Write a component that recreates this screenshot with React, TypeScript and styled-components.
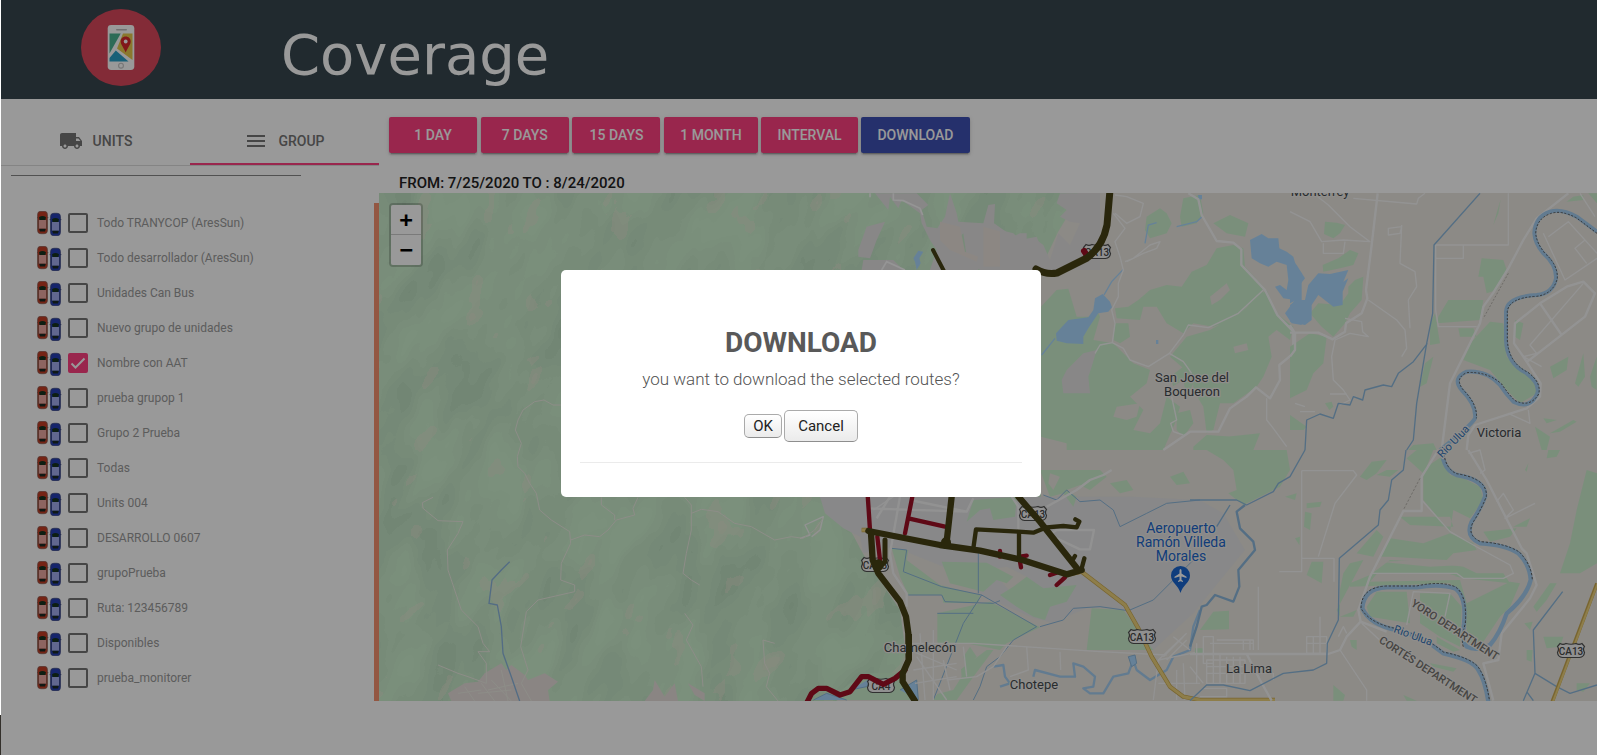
import React, { useState } from "react";
import styled, { createGlobalStyle } from "styled-components";

const GlobalStyle = createGlobalStyle`
  *, *::before, *::after { box-sizing: border-box; }
  html, body { margin: 0; padding: 0; }
  body { font-family: Roboto, "Liberation Sans", sans-serif; color: #222; background: #fff; }
`;

const Page = styled.div`
  display: flex;
  min-height: 100vh;
`;

const WindowEdge = styled.div`
  flex: 0 0 1px;
  background: linear-gradient(#fff 94.7%, #33302b 94.7%);
`;

const AppFrame = styled.div`
  position: relative;
  flex: 1;
  min-width: 0;
  display: flex;
  flex-direction: column;
`;

const Header = styled.header`
  display: flex;
  align-items: flex-start;
  gap: 120px;
  height: 99px;
  padding: 9px 80px;
  background: #37474f;
`;

const Title = styled.h1`
  margin: 13px 0 0;
  font: 400 56px/66px "DejaVu Sans", sans-serif;
  color: #fff;
`;

const Body = styled.div`
  flex: 1;
  display: flex;
`;

const Sidebar = styled.aside`
  flex: 0 0 378px;
  display: flex;
  flex-direction: column;
  padding-bottom: 54px;
`;

const Tabs = styled.div`
  display: flex;
  height: 67px;
  border-bottom: 1px solid #ddd;
`;

const Tab = styled.button<{ $active?: boolean }>`
  flex: 1;
  display: flex;
  align-items: center;
  justify-content: center;
  gap: 10px;
  margin: 0;
  padding: 20px 0 0;
  border: 0;
  border-bottom: 2px solid ${(p) => (p.$active ? "#ff4081" : "transparent")};
  background: none;
  color: #757575;
  font: 500 14px/20px Roboto, sans-serif;
  cursor: pointer;
`;

const Rule = styled.hr`
  width: 290px;
  margin: 9px 0 0 10px;
  border: 0;
  border-top: 1px solid #888;
`;

const GroupPane = styled.div`
  flex: 1;
  margin-top: 27px;
  padding-top: 3px;
  border-right: 5px solid #f5926e;
`;

const GroupList = styled.ul`
  margin: 0;
  padding: 0 0 0 36px;
  list-style: none;
`;

const GroupRow = styled.li`
  height: 35px;
`;

const GroupLabel = styled.label`
  display: flex;
  align-items: center;
  height: 34px;
  font-size: 12px;
  line-height: 16px;
  color: #9a9a9a;
`;

const CheckCell = styled.span`
  display: grid;
  margin: 0 9px 0 6px;
  > * { grid-area: 1 / 1; }
  svg { pointer-events: none; }
`;

const Check = styled.input`
  appearance: none;
  width: 20px;
  height: 20px;
  margin: 0;
  border: 2px solid #757575;
  border-radius: 2px;
  &:checked { background: #ff4081; border-color: #ff4081; }
  & + svg { visibility: hidden; }
  &:checked + svg { visibility: visible; }
`;

const Main = styled.main`
  flex: 1;
  min-width: 0;
  display: flex;
  flex-direction: column;
  padding-bottom: 54px;
`;

const Toolbar = styled.div`
  padding: 18px 10px 0;
  font-size: 15px;
  line-height: 36px;
`;

const ActionButton = styled.button<{ $primary?: boolean }>`
  min-width: 88px;
  height: 36px;
  padding: 0 16px;
  border: 0;
  border-radius: 2px;
  background: ${(p) => (p.$primary ? "#3f51b5" : "#ff4081")};
  color: #fff;
  font: 500 14px/36px Roboto, sans-serif;
  vertical-align: top;
  box-shadow: 0 3px 1px -2px rgba(0, 0, 0, 0.2), 0 2px 2px rgba(0, 0, 0, 0.14), 0 1px 5px rgba(0, 0, 0, 0.12);
  cursor: pointer;
`;

const RangeText = styled.p`
  margin: 20px 0 0 20px;
  font-size: 15px;
  font-weight: 500;
  line-height: 20px;
`;

const MapPane = styled.section`
  position: relative;
  flex: 1;
  overflow: hidden;
  background: #e9e6df;
`;

const MapDrawing = styled.svg`
  position: absolute;
  inset: 0;
  width: 100%;
  height: 100%;
  font-family: Roboto, sans-serif;
`;

const ZoomControl = styled.div`
  position: absolute;
  top: 10px;
  left: 10px;
  display: flex;
  flex-direction: column;
  border: 2px solid rgba(0, 0, 0, 0.2);
  border-radius: 4px;
  background-clip: padding-box;
`;

const ZoomButton = styled.button`
  width: 30px;
  height: 30px;
  padding: 0;
  border: 0;
  border-radius: 0 0 2px 2px;
  background: #fff;
  color: #000;
  font: 700 22px/30px "DejaVu Sans Mono", monospace;
  cursor: pointer;
  &:first-child { border-bottom: 1px solid #ccc; border-radius: 2px 2px 0 0; }
`;

const Overlay = styled.div`
  position: absolute;
  inset: 0;
  display: flex;
  align-items: center;
  justify-content: center;
  padding: 12px 0 0 4px;
  background: rgba(0, 0, 0, 0.4);
`;

const Dialog = styled.div`
  width: 480px;
  padding: 55px 19px 34px;
  border-radius: 5px;
  background: #fff;
  text-align: center;
`;

const DialogTitle = styled.h2`
  margin: 0;
  font-size: 28px;
  line-height: 36px;
  font-weight: 700;
  color: #595959;
`;

const DialogText = styled.p`
  margin: 8px 0 0;
  font-size: 17px;
  line-height: 20px;
  font-weight: 300;
  color: #545454;
`;

const DialogActions = styled.div`
  display: flex;
  align-items: center;
  justify-content: center;
  gap: 2px;
  margin: 21px 0 20px;
`;

const DialogButton = styled.button<{ $large?: boolean }>`
  width: ${(p) => (p.$large ? 74 : 38)}px;
  height: ${(p) => (p.$large ? 32 : 24)}px;
  padding: 0;
  border: 1px solid #aaa;
  border-bottom-color: #8e8e8e;
  border-radius: 5px;
  background: linear-gradient(#fff, #ebebeb);
  color: #222;
  font: 400 15px/20px Roboto, sans-serif;
  cursor: pointer;
`;

const DialogRule = styled.hr`
  margin: 0;
  border: 0;
  border-top: 1px solid #ebebeb;
`;

const Logo = () => (
  <svg width="80" height="77" viewBox="0 0 80 77" aria-hidden="true">
    <ellipse cx="40" cy="38.5" rx="40" ry="38.5" fill="#da495c" />
    <rect x="26.7" y="16" width="26.6" height="45" rx="3.4" fill="#fff" />
    <rect x="35" y="20" width="11" height="1.6" rx=".8" fill="#bbb" />
    <rect x="28.5" y="24.5" width="23" height="28.5" fill="#fff" />
    <path d="M28.5 24.5h11.2l-11.2 20z" fill="#4cb392" />
    <path d="M42 24.5h9.5V51L36 39.5z" fill="#e6c84c" />
    <path d="M34.8 41.5 47.5 52.5h-19v-3.4z" fill="#2ba0c8" />
    <path d="M44.7 27.6c-3 0-5 2.2-5 5 0 3.300 3 6 5 11 2-5 5-7.700 5-11 0-2.800-2-5-5-5z" fill="#d8282c" />
    <circle cx="44.700" cy="32.500" r="1.900" fill="#fff" />
    <circle cx="40" cy="56.700" r="2.400" fill="none" stroke="#c4c4c4" strokeWidth="1.100" />
  </svg>
);

const TruckIcon = () => (
  <svg width="24" height="24" viewBox="0 0 24 24" fill="currentColor" aria-hidden="true">
    <path d="M20 8h-3V4H3c-1.100 0-2 .9-2 2v11h2c0 1.660 1.340 3 3 3s3-1.340 3-3h6c0 1.660 1.340 3 3 3s3-1.340 3-3h2v-5l-3-4zM6 18.500c-.83 0-1.500-.67-1.500-1.500s.67-1.500 1.500-1.500 1.500.67 1.500 1.500-.67 1.500-1.500 1.500zm13.500-9 1.960 2.500H17V9.500h2.500zm-1.500 9c-.83 0-1.500-.67-1.500-1.500s.67-1.500 1.500-1.500 1.500.67 1.500 1.500-.67 1.500-1.500 1.500z" />
  </svg>
);

const MenuIcon = () => (
  <svg width="24" height="24" viewBox="0 0 24 24" fill="currentColor" aria-hidden="true">
    <path d="M3 18h18v-2H3v2zm0-5h18v-2H3v2zm0-7v2h18V6H3z" />
  </svg>
);

const Car = ({ body, glass, edge }: { body: string; glass: string; edge: string }) => (
  <>
    <path d="M-.3 6.600h11.600" stroke={edge} strokeWidth="1" />
    <rect x=".6" y=".3" width="9.800" height="22.400" rx="3.200" fill={body} stroke={edge} strokeWidth=".8" />
    <path d="M2 6.200Q5.500 4 9 6.200L8.300 9.300H2.700z" fill="#17331f" />
    <rect x="2" y="9" width="7" height="8.800" fill={glass} />
    <path d="M2.200 17.800h6.600l-.8 2.800H3z" fill="#1c2a24" />
    <path d="M1.400 9v9M9.600 9v9" stroke={edge} strokeWidth=".8" />
  </>
);

const CarsIcon = () => (
  <svg width="25" height="25" viewBox="0 0 25 25" aria-hidden="true">
    <g><Car body="#c43c24" glass="#eca8a2" edge="#8c6258" /></g>
    <g transform="translate(13 2)"><Car body="#263eb4" glass="#a2acee" edge="#3f4a80" /></g>
  </svg>
);

const Shield = ({ x, y, text = "CA13" }: { x: number; y: number; text?: string }) => (
  <g transform={`translate(${x} ${y})`}>
    <path d="M-11-7.500q3 1.600 6 0 5 1.500 10 0 3 1.600 6 0l2.500 3q-2 2.500 0 6-.5 4.500-5 5H-8.500q-4.500-.5-5-5 2-3.500 0-6z" fill="#f0f0f0" stroke="#505050" strokeWidth="1.200" />
    <text y="4" textAnchor="middle" fontSize="10" fontWeight="500" fill="#484848">{text}</text>
  </g>
);

const forest = "M379 193H1078L1070 212 1058 232 1041 268V497H820L845 520 861 550 870 566 900 610 906 655 898 676 868 680 836 701H379z";

const S = 1 / 3;

const CoverageMap = () => (
  <MapDrawing viewBox="379 193 1218 508" preserveAspectRatio="xMinYMin slice" role="img" aria-label="Coverage map">
    <defs>
      <clipPath id="hills"><path d={forest} /></clipPath>
      <filter id="relief" x="0" y="0" width="1" height="1" colorInterpolationFilters="sRGB">
        <feTurbulence type="fractalNoise" baseFrequency="0.026 0.012" numOctaves="3" seed="7" />
        <feColorMatrix values="0 0 0 0 .62  0 0 0 0 .74  0 0 0 0 .65  1 0 0 0 0" />
        <feComponentTransfer><feFuncA type="discrete" tableValues="0 0 0 .04 .09 .15 .23 .32 .4 .4" /></feComponentTransfer>
      </filter>
      <filter id="clearings" x="0" y="0" width="1" height="1" colorInterpolationFilters="sRGB">
        <feTurbulence type="fractalNoise" baseFrequency="0.034 0.018" numOctaves="3" seed="23" />
        <feColorMatrix values="0 0 0 0 .91  0 0 0 0 .9  0 0 0 0 .83  1 0 0 0 0" />
        <feComponentTransfer><feFuncA type="discrete" tableValues="0 0 0 0 0 0 0 .4 .6 .6" /></feComponentTransfer>
      </filter>
    </defs>
    <rect x="379" y="193" width="1600" height="900" fill="#e9e6df" />
    {/* western forest with its hill shading */}
    <path fill="#cef0cf" d={forest} />
    <g clipPath="url(#hills)">
      <rect x="300" y="-300" width="1100" height="1300" transform="rotate(24 640 440)" filter="url(#relief)" />
      <rect x="300" y="-300" width="1100" height="1300" transform="rotate(30 640 440)" filter="url(#clearings)" />
    </g>

    {/* northern suburbs */}
    <g transform={`translate(850 190) scale(${S})`}>
      <path fill="#e3e1e2" d="M75 10H200L235 45 215 60 230 110 262 115 285 80 300 10 320 70 325 95 400 100 415 45 435 42 432 100 490 140 510 130 530 130 530 180 560 200 560 150 580 165 600 210 625 130 660 165 690 100 660 95 630 80 650 60 620 40 630 10H750V240H530L500 220 500 180 480 240H390L350 200 340 130 320 150 330 190 385 190 385 240H240L260 180 240 150 215 100 210 70 155 30 145 55 120 20 115 60z" />
      <path fill="#e9e2da" d="M270 95 330 110 345 185 385 200 380 215 300 180 270 150zM400 110 470 130 500 180 480 230H400z" />
      <path fill="#e3e1e2" d="M25 180 50 110 105 95 80 150 60 205 25 200zM40 210H130L160 240H35z" />
      <path fill="none" stroke="#f8f8f8" strokeWidth="5" d="M60 22V10M130 10V30L160 32 210 55 218 75M95 240 110 215 165 240" />
      <path fill="#aad8fe" d="M190 205 205 182 220 185 208 205 212 220 200 240 195 215z" />
    </g>

    {/* San Jose del Boqueron and its lakes */}
    <g transform={`translate(1000 190) scale(${S})`}>
      <path fill="#cbefcd" d="M345 355 385 350 415 330 450 300 500 285 545 290 575 245 620 225 650 175 700 165 730 175 735 230 790 290 790 320 740 350 700 390 640 410 580 400 550 430 500 400 470 350 430 350 420 390 350 385zM345 400 385 400 390 440 360 460 340 450zM440 80 480 55 500 70 515 100 500 130 450 145 435 120zM550 25 600 15 610 70 590 100 545 110 540 80zM640 100 690 75 745 100 735 140 680 130zM800 300 830 370 880 410 870 450 830 420 805 440 815 500 790 560 770 590 700 640 660 640 640 720 620 730 610 650 580 600 580 560 510 500 560 440 630 420 720 370zM510 560 550 530 590 560 570 600 520 590zM530 670 570 660 580 700 550 740 530 720zM580 770 620 735 700 740 690 780H580zM680 740 780 730 760 780H690z" />
      <path fill="#cbefcd" d="M123 350 170 300 260 290 300 380 280 450 340 460 400 520 450 540 440 580 390 620 430 660 400 720 450 730 480 700 500 620 540 650 525 700 490 780H123z" />
      <path fill="#e9e6df" d="M200 280 260 260 300 310 280 380 230 380zM350 650 420 640 410 680 380 690 340 680zM630 320 680 280 690 300 660 330 635 345zM700 470 740 460 745 480 705 490zM550 570 560 620 500 600zM123 740 200 760 200 780H123z" />
      <path fill="#e3e1e2" d="M200 540 250 490 290 480 275 530 265 560 270 610 190 610 185 570zM0 120 40 130 60 150 110 140 130 190 140 240H0z" />
      <path fill="#aad8fe" d="M168 430 205 390 265 382 280 360 285 325 308 312 330 335 336 352 325 365 295 370 265 415 250 440 250 462 200 460 170 452zM750 150 785 132 805 145 835 145 838 175 860 185 880 200 890 235 905 250V405L875 400 855 370 885 330 850 325 825 290 840 285 860 300 865 270 860 225 830 215 805 230 780 220 755 205zM594 15H606V28H596zM468 450H475V462H468z" />
      <g fill="none" stroke="#aad8fe" strokeWidth="4"><path d="M606 80 590 95 530 110M470 98 445 105 435 160M370 238 335 275 312 315M165 445 125 495" /></g>
      <g fill="none" stroke="#f6f6f6" strokeLinejoin="round" strokeWidth="5">
        <path d="M565 10 595 28 605 75 650 153 700 158 724 178V225L795 300 832 375 880 425V490L838 525 840 570 810 625 768 592 740 620 690 655 655 725H570L490 780" strokeWidth="7" />
        <path d="M340 70 375 115 345 155 360 200 370 240 355 280 355 320 335 360 345 400 337 458 300 465 285 490M337 458 370 475 390 510 445 530 508 490 550 435 565 405 625 413 715 370 790 300M508 490 550 515 575 550M375 215 400 205 450 165 480 155 470 175 430 190 380 215M515 620 530 690 512 700 520 725 550 735M345 15 380 20 430 40 420 80 380 100 345 70M800 625V690L820 715 860 770" strokeWidth="4" />
      </g>
    </g>

    {/* Rio Ulua, upper reach */}
    <g transform={`translate(1290 190) scale(${S})`}>
      <path fill="#cbefcd" d="M105 95 140 98 165 105 150 130 130 145 102 132zM98 225 145 205 180 180 205 190 190 225 150 235 100 245zM175 290 195 270 220 260 215 330 180 370 165 400 130 440 95 410 60 370 85 340 150 345 175 310zM0 470 60 430 110 440 100 520 70 550 50 600 0 625zM0 675 50 710 40 720 0 720zM105 640 125 635 130 650 118 660zM445 380 475 330 580 330 570 390 440 400zM575 205 640 210 650 240 620 300 590 310 580 260 565 260zM420 400 435 370 450 460 420 465zM405 520 430 500 410 580 390 590zM545 455 600 395 640 400 650 500 730 560 740 610 690 640 650 600 600 540 520 510zM505 415 550 415 560 440 510 440zM675 390 700 400 690 450 675 440zM780 530 835 500 830 540 790 565zM855 580 880 490 885 560 865 590zM900 560 920 500V600L905 590zM760 685 800 690 770 700zM780 730 850 690 860 695 810 725zM735 710 780 740 770 780H755zM850 20 880 15V30L830 35zM895 10H921V40zM610 105 632 28 625 70zM370 765 430 760 440 780H355z" />
      <path fill="#aad8fe" d="M0 200 20 225 45 265 25 290 25 330 45 330 55 285 85 250 120 252 175 240 160 275 175 265 158 305 158 345 130 350 85 315 65 345 65 390 45 405 0 395V345L20 330 0 340z" />
      <g fill="none" stroke="#f6f6f6" strokeLinejoin="round">
        <path strokeWidth="7" d="M263 10 245 165 228 300 232 325 215 370 168 400 165 425 128 448 85 428H0M835 10 740 85 700 150 655 235 610 308 580 350 570 400 480 580 455 780M530 780 535 735 555 705 710 655 750 620 752 580 700 500 672 460 675 400 750 340 830 290 880 275 915 310 885 380 712 515M750 340 815 435M0 405 15 430V480L0 500" />
        <path strokeWidth="4" d="M0 65 60 95 95 155 160 150 240 155 180 110 115 45 70 10M190 25 380 42 385 25 405 10M435 165H655L655 10M437 165 437 360 445 410H560M437 205H520V165M235 330 320 390 345 420 350 475 335 500M335 105 330 220 375 245 380 290 355 330 360 415M165 385 215 395 218 425 235 440 180 430 135 450 125 500 130 570 160 600 180 630 150 645M775 140 835 95 921 190M760 130 825 270 921 205M885 150 855 175 890 220M880 280 720 465 740 490M740 490 700 500 755 530M655 670 720 700 715 660M870 10 915 80M120 612H170M295 115 335 110 330 130 295 135zM100 160V190H160L165 155M15 640 45 650M30 665H75" />
      </g>
      <g fill="none" stroke="#8cb8dc" strokeLinejoin="round">
        <path strokeWidth="4" d="M570 10 432 165 428 370 410 460 380 640 370 750 350 780M412 460 370 515 325 550 305 590 280 585 225 600 218 630 190 620 180 645 145 640 130 685 90 672 50 690 45 780" />
        <path stroke="#a4cdf0" strokeWidth="12" d="M921 125 860 80Q815 55 780 65Q735 80 733 130Q735 160 760 190Q800 225 798 265Q790 310 740 315Q650 320 648 365V450Q650 520 710 550Q750 580 742 610Q720 660 670 635Q650 615 630 585Q590 540 530 545Q485 565 515 600Q560 645 555 685Q545 705 450 780" />
        <path stroke="#5a5a5a" strokeWidth="3" strokeDasharray="6 5" d="M921 130 860 84Q815 60 784 70Q740 84 737 130Q740 160 765 190Q804 225 802 265Q790 312 740 319Q656 323 652 365V450Q655 518 714 547Q755 578 746 612Q720 655 674 631Q655 612 635 582Q590 543 530 548Q492 565 520 600Q564 645 559 685" />
        <path stroke="#b8b4ae" strokeWidth="3" strokeDasharray="6 5" d="M655 250 580 385" />
      </g>
    </g>

    {/* city, airport and southern valley */}
    <g transform={`translate(800 470) scale(${S})`}>
      <path fill="#e3e3e4" d="M60 80H1000L1200 90 1270 130 1335 240 1180 430 1060 540 970 420 870 410 800 440 760 460 690 440 600 400 560 385 430 290 280 230 190 250 180 200 130 175 75 130z" />
      <path fill="#e9e6df" d="M300 375 425 380 410 520 340 540zM640 375 600 330 560 300 620 290 680 320z" />
      <path fill="#cbefcd" d="M500 155 520 90 650 80 645 140 580 150 570 115 540 120zM275 235 325 240 320 270 420 345 540 375 535 400 430 398 425 375H325L300 320zM425 275 560 278 640 320 620 340 590 330 550 365 450 340zM412 430 545 400 570 395 720 472 620 520 600 540 500 520H412zM600 375 640 350 680 320 730 355 830 345 800 395 750 410 735 450 700 440 650 410zM875 415 970 420 1060 540 860 540zM720 0 900 0 920 20 870 60 840 45 800 60 830 80 820 110 790 70 750 80zM930 40 980 30 1000 60 960 70zM1110 20 1150 5 1170 40 1130 45zM0 690 100 680 150 640 210 610 300 610 320 640 330 690zM400 690 420 660 480 600 560 540 580 540 520 620 470 690zM490 560 510 530 530 560 500 590z" />
      <path fill="#e9e6df" d="M750 10 780 20 760 60 745 40zM50 690 75 670 100 680zM420 540 480 560 485 620 460 660 340 690 330 620 340 500 400 480z" />
      <g fill="none" stroke="#8cb8dc" strokeWidth="3" strokeLinejoin="round">
        <path d="M730 75 770 90 800 60 840 95 900 90 940 120 960 170 1040 130 1100 100 1200 90M275 235 320 240 310 305 425 350 545 375 710 470 640 510 600 560 560 590 540 650 520 690M325 375H425L435 395 580 400 600 392M545 375 490 460 400 690M412 430H520M720 470 790 450 820 415 900 410 985 422 1060 390 1150 300 1200 250M535 240V370" />
        <path strokeWidth="7" stroke="#a4cdf0" d="M580 590 610 585 615 620 630 640 600 650M700 620 705 600 780 620 825 620 820 580 850 590 885 620 880 650 850 655 870 670 910 670 940 620 985 610 1000 570 1010 600 1050 630 1100 600 1120 560 1170 540 1180 470 1200 420" />
        <path fill="#aad8fe" d="M985 560 1005 555 1010 580 995 590zM40 690 80 670 140 690M150 660 200 650 220 620M300 660 350 630 355 690" />
      </g>
      <g fill="none" stroke="#f4f4f4" strokeLinejoin="round">
        <path strokeWidth="7" d="M270 80 230 145M300 80 270 250 280 310 320 370 320 410M740 110 830 60 870 30 910 15 935 0M635 80 655 110V190M200 115 500 125 520 85M330 90 500 125M755 190 770 180 882 180 870 238H840L770 205" />
        <path strokeWidth="4" d="M0 205 30 195 15 165 70 140 60 180 35 200M220 120 280 80M330 520H520L900 545 1100 555M440 630 530 620 580 590 620 530M490 530 500 620M680 530 685 600 630 620M780 545 782 600M340 545 470 600M350 560 440 690M400 480V690M360 490 375 690M430 570 450 660M340 600 470 580M345 640 470 620M1060 690 1075 570 1160 490M1075 570 1200 545M1090 560 1150 500M1100 570 1160 510M1120 500 1170 540M1130 600V690M1075 640H1200M1150 580 1155 690" />
      </g>
      <g fill="none" strokeLinejoin="round"><path stroke="#c9a850" strokeWidth="13" d="M185 180H210M800 315 845 305 975 405 1015 475 1055 560 1110 650 1150 680 1200 690H1425" /><path stroke="#edd27c" strokeWidth="9" d="M185 180H210M800 315 845 305 975 405 1015 475 1055 560 1110 650 1150 680 1200 690H1425" /></g>
    </g>

    {/* La Lima and Rio Ulua, lower reach */}
    <g transform={`translate(1190 450) scale(${S})`}>
      <path fill="#cbefcd" d="M50 0H290L300 60 270 110 240 125 160 165 115 130 140 120 130 60 100 30zM510 80 545 35 590 30 560 70 530 90zM560 75 590 60 625 60 600 80zM1075 0H1110L1100 20 1070 25zM1005 60 1015 40 1010 65zM285 140 320 130 315 150zM350 160 395 155 390 170 350 175zM345 185 365 190 360 240 342 230zM350 375 365 335 400 335 395 400zM315 265 330 260 328 285zM30 540 70 485 117 482V538zM15 595H40V610H15zM480 570 500 570 500 600 485 590zM430 705 465 735 460 752H430zM640 735 680 752 650 752zM710 50 730 0H680L650 25 700 70V150L780 245 790 180 840 205 880 150 870 110 820 85 780 75 755 20zM630 200 780 200 790 230 660 225zM500 310 560 240 580 260 550 320zM460 370 480 340 520 330 440 480 450 500 500 480 490 500 450 500V420zM570 320 600 265 700 280 780 250 850 280 860 300 790 310 770 330 600 320zM480 400 540 375 600 330 700 335 820 350 860 370 940 370 960 400 820 385 760 370 560 372 540 395 810 390 830 460 960 395 990 400 960 470 930 500 880 575 835 580 820 450 780 400 480 410zM530 470 560 425 650 425 660 520 540 500zM690 430H780L815 470 810 590 750 560 690 520zM740 560 810 600 790 605 740 580zM720 640 800 655 790 665 730 650zM880 245 980 235 960 260 900 275zM970 230 1020 205 1010 230zM1110 370 1140 280 1160 180 1190 60 1221 70V340L1170 370zM1030 470 1080 400 1100 400 1070 450 1040 485zM1060 560 1120 560 1110 590 1070 595zM1003 520 1028 515 1020 540zM1010 600 1028 600 1025 635 1010 630zM1160 700 1200 700 1180 725 1160 720z" />
      <g fill="#e9e6df"><path d="M570 335 700 330 820 345 720 350zM600 372H780L800 378 620 380z" /></g>
      <g fill="none" stroke="#f6f6f6" strokeLinejoin="round">
        <path strokeWidth="7" d="M745 0 695 80V183H640L540 380 505 480 512 515 470 560 450 600 415 612H0M512 515 590 545M835 0 890 90 995 295 1010 310 1040 405 1020 445 935 550 925 630 880 640 910 752M170 612 210 690 245 752" />
        <path strokeWidth="4" d="M335 62H490L500 75 435 160 385 320M335 62V365H268M335 325H432V395M695 150 780 245 850 285 960 345 970 370 940 385H820L800 370H545M515 520 590 590M450 600 530 720V752M205 410V600M920 155 940 130 970 180 945 205 1035 160M835 10 870 0 885 60 870 70M650 525 670 425 780 430 765 500M40 560H70V640H40zM80 570H190V600M50 630H165V700H50zM60 580H190M50 650H165M50 670H165M70 610V700M90 610V700M110 620V700M130 620V700M150 620V700M350 560H410V610H350zM350 580H410M370 560V610M390 500V610M20 580V700M40 715H110V740H30M200 670H250V690M0 650 40 700M180 570V600M160 570V600M445 560 460 530 470 550" />
      </g>
      <g fill="none" stroke="#8cb8dc" strokeLinejoin="round">
        <path strokeWidth="4" d="M345 0 300 80 265 100 250 125 170 165 140 150 0 150M120 165 80 230M648 0 640 60 605 90 595 150 570 180 565 225 448 325 445 510 412 580 410 640 370 660 280 670 180 722 100 705 50 705 0 752M1118 425 1030 540 1035 670 1100 710 1140 730 1221 705M1035 670 1000 752M1010 725 1030 752" />
        <path strokeWidth="7" d="M165 165 140 185 150 235 190 275 195 300 145 360 148 410 130 455 75 435 50 465 35 470 20 530 0 590" />
        <path stroke="#a4cdf0" strokeWidth="13" d="M755 0Q760 60 800 75Q890 90 885 140Q870 180 845 215Q825 260 870 280Q950 285 985 310Q1020 345 1022 390Q1010 440 950 490Q930 550 900 585Q860 605 830 590Q815 570 822 520Q830 440 795 415Q750 400 680 412L590 412Q520 415 517 475Q540 525 620 540Q700 560 760 610Q850 630 865 660Q885 690 895 755" />
        <path stroke="#5a5a5a" strokeWidth="3" strokeDasharray="7 5" d="M760 0Q765 56 800 71Q894 86 889 140Q872 182 849 217Q829 256 872 275Q952 281 989 307Q1025 345 1027 390M820 590Q812 570 826 520Q832 434 795 410Q750 392 680 408L590 408Q514 411 513 475Q540 521 620 536Q700 556 760 606Q855 626 870 660Q889 690 899 755" />
        <path stroke="#b8b4ae" strokeWidth="3" strokeDasharray="7 5" d="M690 85 640 180" />
      </g>
      <path fill="none" stroke="#c9a850" strokeWidth="11" d="M1221 400 1085 760" />
      <path fill="none" stroke="#edd27c" strokeWidth="6" d="M1223 400 1087 760" />
    </g>

    {/* mountain trails and streams */}
    <g transform={`translate(378 190) scale(${S})`} fill="none" strokeLinejoin="round">
      <path fill="#e6dedb" d="M210 1510 260 1480 300 1475 320 1450 370 1420 385 1440 400 1425 440 1455 450 1470 500 1450 540 1475 510 1500 515 1533H220zM800 1533 825 1500 830 1470 860 1520 890 1480 900 1533zM930 1480 980 1510 980 1533 950 1515z" />
      <g stroke="#ebebe2" strokeWidth="3">
        <path d="M550 645 525 645 498 630 470 635 435 660 420 690 412 720 430 760 418 800 420 830 440 850 455 880 475 910 485 960 520 990 575 1025 578 1060 550 1120 548 1170 590 1185 590 1205 480 1230 445 1265 428 1370 450 1440 430 1480 460 1533" />
        <path d="M165 922 133 938 135 955 180 992 255 995 240 1030 208 1080 210 1140 250 1260 300 1310 315 1360 335 1385 300 1385 325 1420V1480L270 1460 240 1450 180 1425" />
        <path d="M578 1050 620 1035 665 1040 690 1020 715 990 770 975 765 955 780 922M670 922 670 945 710 975V990M920 922 940 945V1020L925 1090 915 1150 940 1170 965 1185M940 970 970 958 1020 965 1070 1000 1120 1010 1190 1050 1240 1040 1275 1045 1310 1020 1335 985M920 1270 945 1305 925 1350 970 1430 975 1490M1190 1360 1155 1350 1160 1420 1175 1450 1165 1490 1200 1533" />
        <path d="M330 1500 420 1480M300 1510 400 1500M340 1470 400 1533M370 1440 390 1533M310 1480 350 1533M260 1490 290 1533M240 1510 310 1500" />
      </g>
      <path stroke="#8ab4dc" strokeWidth="4" d="M395 1115 370 1140 342 1170 333 1240 358 1245 370 1310 375 1390 400 1460 425 1533" />
    </g>

    <Shield x={1097} y={252} />
    <Shield x={1033} y={514} />
    <Shield x={875} y={565} />
    <Shield x={881} y={686} text="CA4" />

    {/* driven routes */}
    <g transform={`translate(800 470) scale(${S})`} fill="none" strokeLinecap="round" strokeLinejoin="round">
      <g stroke="#9e1026" strokeWidth="13">
        <path d="M203 75 210 180M337 80 315 190M325 145 435 170M232 200 240 270M600 243V260M660 260 680 257M660 275 663 292M770 345 795 322M750 315 770 308" />
        <path strokeWidth="16" d="M315 600 285 625 250 643 205 620 185 620 150 665 120 675 80 655 55 655 35 670 22 695" />
      </g>
      <g stroke="#464115">
        <path strokeWidth="19" d="M205 183 420 225 540 242 660 268 800 313 845 300M455 80 440 215M655 80 720 155 835 300" />
        <path strokeWidth="13" d="M520 235 528 178 655 185 700 188 740 172 790 168 830 172 838 155 826 148M657 188V260M825 258 815 275M853 265 845 295" />
        <path strokeWidth="15" d="M255 210V275L235 295" />
        <path strokeWidth="19" d="M213 190 218 270 235 310 300 395 318 440 325 490 326 570 308 610 308 635 345 693" />
        <path strokeWidth="30" d="M235 283V288M438 217V222" />
      </g>
    </g>
    <g fill="none" strokeLinecap="round" strokeLinejoin="round">
      <path stroke="#9e1026" strokeWidth="6" d="M1084 251 1088 257" />
      <path stroke="#464115" strokeWidth="7" d="M1110 190 1107 225Q1103 246 1087 258L1057 273Q1046 275 1036 269" />
      <path stroke="#464115" strokeWidth="4" d="M933 250 946 275" />
    </g>

    <Shield x={1142} y={637} />
    <Shield x={1571} y={651} />
    <g fontSize="13" fill="#454a4e" stroke="#eeece8" strokeWidth="2.500" paintOrder="stroke" strokeLinejoin="round" textAnchor="middle">
      <text x="1192" y="382">San Jose del</text>
      <text x="1192" y="396">Boqueron</text>
      <text x="1499" y="437">Victoria</text>
      <text x="920" y="652">Chamelecón</text>
      <text x="1034" y="689">Chotepe</text>
      <text x="1249" y="673">La Lima</text>
      <text x="1320" y="196">Monterrey</text>
      <g fontSize="14" fill="#1b66cc">
        <text x="1181" y="533">Aeropuerto</text>
        <text x="1181" y="547">Ramón Villeda</text>
        <text x="1181" y="561">Morales</text>
      </g>
      <g fontSize="11" fill="#3474b8">
        <text transform="translate(1456 444) rotate(-46)">Rio Ulua</text>
        <text transform="translate(1412 639) rotate(20)">Rio Ulua</text>
      </g>
      <g fontSize="11" fontWeight="500" fill="#75736f">
        <text transform="translate(1453 633) rotate(33)">YORO DEPARTMENT</text>
        <text transform="translate(1426 673) rotate(33)">CORTÉS DEPARTMENT</text>
      </g>
    </g>
    <path stroke="#464115" strokeWidth="6" d="M909 634V660" />
    <path fill="#1a66d0" d="M1180.500 566a9.500 9.500 0 0 0-9.500 9.500c0 7 7.500 10 9.500 17.500 2-7.500 9.500-10.500 9.500-17.500a9.500 9.500 0 0 0-9.500-9.500z" />
    <path fill="#fff" d="M1180.500 569q1 0 1 1.500v3l5 3.200v1.400l-5-1.500v3.200l1.500 1.200v1l-2.500-.8-2.500.8v-1l1.500-1.200v-3.200l-5 1.500v-1.400l5-3.200v-3q0-1.500 1-1.500z" />
  </MapDrawing>
);

const groups = [
  "Todo TRANYCOP (AresSun)", "Todo desarrollador (AresSun)", "Unidades Can Bus", "Nuevo grupo de unidades",
  "Nombre con AAT", "prueba grupop 1", "Grupo 2 Prueba", "Todas", "Units 004", "DESARROLLO 0607",
  "grupoPrueba", "Ruta: 123456789", "Disponibles", "prueba_monitorer",
];

const periods = ["1 DAY", "7 DAYS", "15 DAYS", "1 MONTH", "INTERVAL"];

export default function App() {
  const [selected, setSelected] = useState<string[]>(["Nombre con AAT"]);
  const toggle = (name: string) =>
    setSelected((s) => (s.includes(name) ? s.filter((n) => n !== name) : [...s, name]));

  return (
    <Page>
      <GlobalStyle />
      <WindowEdge />
      <AppFrame>
        <Header>
          <Logo />
          <Title>Coverage</Title>
        </Header>
        <Body>
          <Sidebar>
            <Tabs role="tablist">
              <Tab role="tab" aria-selected={false}><TruckIcon />UNITS</Tab>
              <Tab role="tab" aria-selected $active><MenuIcon />GROUP</Tab>
            </Tabs>
            <Rule />
            <GroupPane>
              <GroupList>
                {groups.map((name) => (
                  <GroupRow key={name}>
                    <GroupLabel>
                      <CarsIcon />
                      <CheckCell>
                        <Check type="checkbox" checked={selected.includes(name)} onChange={() => toggle(name)} />
                        <svg width="20" height="20" viewBox="0 0 20 20" fill="none" stroke="#fff" strokeWidth="2" aria-hidden="true">
                          <path d="M3.500 10.500 7.500 14.500 16.500 5.500" />
                        </svg>
                      </CheckCell>
                      {name}
                    </GroupLabel>
                  </GroupRow>
                ))}
              </GroupList>
            </GroupPane>
          </Sidebar>
          <Main>
            <Toolbar>
              {periods.map((p) => (
                <React.Fragment key={p}>
                  <ActionButton>{p}</ActionButton>{" "}
                </React.Fragment>
              ))}
              <ActionButton $primary>DOWNLOAD</ActionButton>
            </Toolbar>
            <RangeText>FROM: 7/25/2020 TO : 8/24/2020</RangeText>
            <MapPane>
              <CoverageMap />
              <ZoomControl>
                <ZoomButton aria-label="Zoom in">+</ZoomButton>
                <ZoomButton aria-label="Zoom out">−</ZoomButton>
              </ZoomControl>
            </MapPane>
          </Main>
        </Body>
        <Overlay>
          <Dialog role="dialog" aria-modal="true" aria-labelledby="dialog-title">
            <DialogTitle id="dialog-title">DOWNLOAD</DialogTitle>
            <DialogText>you want to download the selected routes?</DialogText>
            <DialogActions>
              <DialogButton>OK</DialogButton>
              <DialogButton $large>Cancel</DialogButton>
            </DialogActions>
            <DialogRule />
          </Dialog>
        </Overlay>
      </AppFrame>
    </Page>
  );
}
